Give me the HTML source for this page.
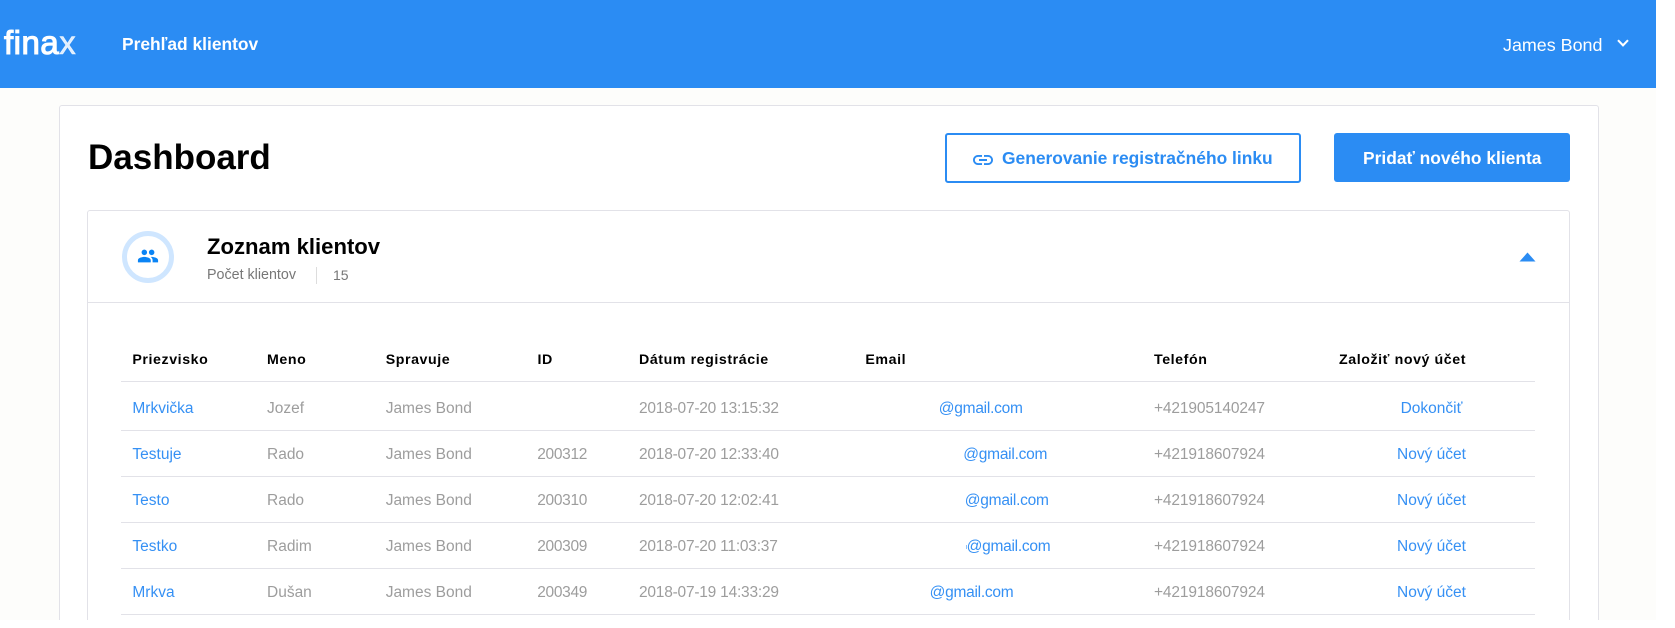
<!DOCTYPE html>
<html lang="sk">
<head>
<meta charset="utf-8">
<title>Dashboard</title>
<style>
html,body{margin:0;padding:0;width:1675px;height:628px;overflow:hidden;background:#fff}
body{position:relative;font-family:"Liberation Sans",Arial,sans-serif}
div,span,a{position:absolute;white-space:nowrap}
#page{left:0;top:0;width:1656px;height:620px;background:#fdfdfb;overflow:hidden}
#top{left:0;top:0;width:1656px;height:88px;background:#2b8cf3}
.card{box-sizing:border-box;background:#fff;border:1px solid #e2e2e8;border-radius:3px}
.h{font-weight:700;font-size:14.2px;letter-spacing:.58px;line-height:20px;color:#000;top:350px}
.c{font-size:15.5px;line-height:20px;color:#9d9d9d}
.b{font-size:15.5px;line-height:20px;color:#3590f4}
.e{letter-spacing:-.25px}
.d{letter-spacing:-.22px}
.i{letter-spacing:-.3px}
.p{letter-spacing:-.12px}
.l{left:121px;width:1414px;height:1px;background:#e2e2e8}
.m{left:1331.5px;width:200px;text-align:center}
</style>
</head>
<body>
<div id="page">
<div id="top"></div>
<span style="left:4px;top:24px;font-size:33px;line-height:38px;color:#fff;font-weight:400;-webkit-text-stroke:1.1px #fff;letter-spacing:.5px">fina<span style="position:static;color:rgba(255,255,255,.85);-webkit-text-stroke:.6px rgba(255,255,255,.8)">x</span></span>
<span style="left:122px;top:34px;font-size:17.4px;line-height:20px;font-weight:700;color:#fff">Prehľad klientov</span>
<span style="left:1503px;top:35px;font-size:17.9px;line-height:20px;color:#fff">James Bond</span>
<svg style="position:absolute;left:1616px;top:38px" width="14" height="10" viewBox="0 0 14 10"><path d="M2 2.2 7 7.4 12 2.2" fill="none" stroke="#fff" stroke-width="2.1"/></svg>

<div class="card" style="left:59px;top:105px;width:1540px;height:530px"></div>
<span style="left:88px;top:138px;font-size:35px;line-height:40px;font-weight:700;color:#000">Dashboard</span>

<div style="box-sizing:border-box;left:945px;top:133px;width:356px;height:50px;border:2px solid #2b8cf3;border-radius:3px;background:#fff"></div>
<svg style="position:absolute;left:971px;top:148px" width="24" height="24" viewBox="0 0 24 24"><path fill="#2b8cf3" d="M3.9 12c0-1.71 1.39-3.1 3.1-3.1h4V7H7c-2.76 0-5 2.24-5 5s2.24 5 5 5h4v-1.9H7c-1.71 0-3.1-1.39-3.1-3.1zM8 13h8v-2H8v2zm9-6h-4v1.9h4c1.71 0 3.1 1.39 3.1 3.1s-1.39 3.1-3.1 3.1h-4V17h4c2.76 0 5-2.24 5-5s-2.24-5-5-5z"/></svg>
<span style="left:1002px;top:148px;font-size:17.4px;line-height:20px;font-weight:700;color:#2b8cf3">Generovanie registračného linku</span>
<div style="left:1334px;top:133px;width:236px;height:49px;background:#2b8cf3;border-radius:3px"></div>
<span style="left:1363px;top:148px;font-size:17.4px;line-height:20px;font-weight:700;color:#fff">Pridať nového klienta</span>

<div class="card" style="left:87px;top:210px;width:1483px;height:430px"></div>
<div style="left:87px;top:302px;width:1483px;height:1px;background:#e2e2e8"></div>
<div style="box-sizing:border-box;left:122px;top:230.5px;width:52px;height:52px;border:5.5px solid #cfe6ff;border-radius:50%;background:#fff"></div>
<svg style="position:absolute;left:137px;top:245px" width="22" height="22" viewBox="0 0 24 24"><path fill="#0a84f5" d="M16 11c1.66 0 2.99-1.34 2.99-3S17.66 5 16 5c-1.66 0-3 1.34-3 3s1.34 3 3 3zm-8 0c1.66 0 2.99-1.34 2.99-3S9.66 5 8 5C6.34 5 5 6.34 5 8s1.34 3 3 3zm0 2c-2.33 0-7 1.17-7 3.5V19h14v-2.5c0-2.33-4.67-3.5-7-3.5zm8 0c-.29 0-.62.02-.97.05 1.16.84 1.97 1.97 1.97 3.45V19h6v-2.5c0-2.33-4.67-3.5-7-3.5z"/></svg>
<span style="left:207px;top:234px;font-size:22.1px;line-height:26px;font-weight:700;color:#000">Zoznam klientov</span>
<span style="left:207px;top:265px;font-size:14.3px;line-height:20px;color:#777">Počet klientov</span>
<div style="left:316px;top:267px;width:1px;height:17px;background:#ddd"></div>
<span style="left:333px;top:265px;font-size:14px;line-height:20px;color:#777">15</span>
<svg style="position:absolute;left:1519px;top:251.5px" width="17" height="10" viewBox="0 0 17 10"><path d="M8.5 .5 16.5 9.5H.5z" fill="#2b8cf3"/></svg>

<span class="h" style="left:132.4px">Priezvisko</span>
<span class="h" style="left:267px">Meno</span>
<span class="h" style="left:385.7px">Spravuje</span>
<span class="h" style="left:537.5px">ID</span>
<span class="h" style="left:639px">Dátum registrácie</span>
<span class="h" style="left:865.4px">Email</span>
<span class="h" style="left:1154px">Telefón</span>
<span class="h" style="left:1339px">Založiť nový účet</span>
<div class="l" style="top:381px"></div>

<span class="b" style="left:132.4px;top:399px">Mrkvička</span>
<span class="c" style="left:267px;top:399px">Jozef</span>
<span class="c" style="left:385.7px;top:399px">James Bond</span>
<span class="c d" style="left:639px;top:399px">2018-07-20 13:15:32</span>
<span class="b e" style="left:938.8px;top:399px">@gmail.com</span>
<span class="c p" style="left:1154px;top:399px">+421905140247</span>
<span class="b m" style="top:399px">Dokončiť</span>
<div class="l" style="top:430px"></div>

<span class="b" style="left:132.4px;top:445px">Testuje</span>
<span class="c" style="left:267px;top:445px">Rado</span>
<span class="c" style="left:385.7px;top:445px">James Bond</span>
<span class="c i" style="left:537.2px;top:445px">200312</span>
<span class="c d" style="left:639px;top:445px">2018-07-20 12:33:40</span>
<span class="b e" style="left:963.3px;top:445px">@gmail.com</span>
<span class="c p" style="left:1154px;top:445px">+421918607924</span>
<span class="b m" style="top:445px">Nový účet</span>
<div class="l" style="top:476px"></div>

<span class="b" style="left:132.4px;top:491px">Testo</span>
<span class="c" style="left:267px;top:491px">Rado</span>
<span class="c" style="left:385.7px;top:491px">James Bond</span>
<span class="c i" style="left:537.2px;top:491px">200310</span>
<span class="c d" style="left:639px;top:491px">2018-07-20 12:02:41</span>
<span class="b e" style="left:964.8px;top:491px">@gmail.com</span>
<span class="c p" style="left:1154px;top:491px">+421918607924</span>
<span class="b m" style="top:491px">Nový účet</span>
<div class="l" style="top:522px"></div>

<span class="b" style="left:132.4px;top:537px">Testko</span>
<span class="c" style="left:267px;top:537px">Radim</span>
<span class="c" style="left:385.7px;top:537px">James Bond</span>
<span class="c i" style="left:537.2px;top:537px">200309</span>
<span class="c d" style="left:639px;top:537px">2018-07-20 11:03:37</span>
<div style="left:965.5px;top:545px;width:1px;height:4px;background:#8fc0f8"></div>
<span class="b e" style="left:966.6px;top:537px">@gmail.com</span>
<span class="c p" style="left:1154px;top:537px">+421918607924</span>
<span class="b m" style="top:537px">Nový účet</span>
<div class="l" style="top:568px"></div>

<span class="b" style="left:132.4px;top:583px">Mrkva</span>
<span class="c" style="left:267px;top:583px">Dušan</span>
<span class="c" style="left:385.7px;top:583px">James Bond</span>
<span class="c i" style="left:537.2px;top:583px">200349</span>
<span class="c d" style="left:639px;top:583px">2018-07-19 14:33:29</span>
<span class="b e" style="left:929.6px;top:583px">@gmail.com</span>
<span class="c p" style="left:1154px;top:583px">+421918607924</span>
<span class="b m" style="top:583px">Nový účet</span>
<div class="l" style="top:614px"></div>
</div>
</body>
</html>
